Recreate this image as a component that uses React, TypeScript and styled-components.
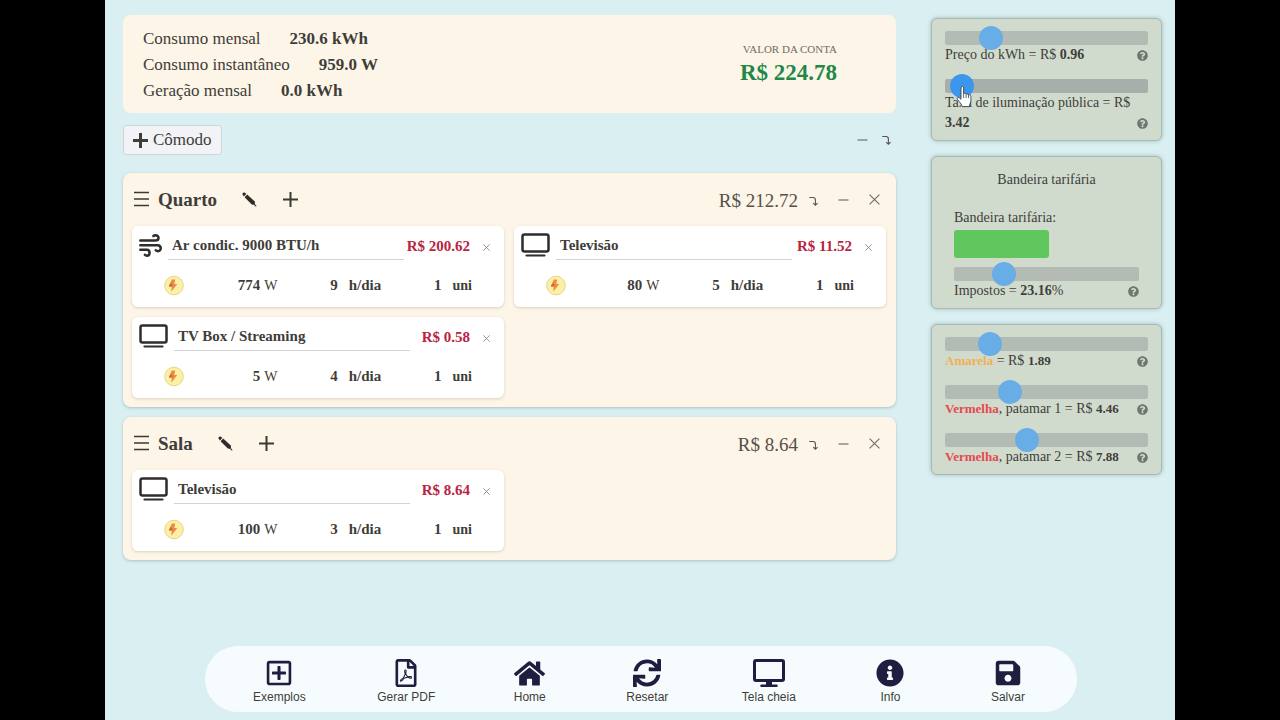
import React, { useState } from 'react';
import styled, { createGlobalStyle } from 'styled-components';
import {
  FaHome,
  FaInfoCircle,
  FaQuestionCircle,
  FaRegFilePdf,
  FaRegPlusSquare,
  FaSave,
  FaSync,
} from 'react-icons/fa';

const GlobalStyle = createGlobalStyle`
  * { box-sizing: border-box; }
  body {
    margin: 0;
    background: #000;
    color: #3f3d3a;
    font-family: "Liberation Serif", "Times New Roman", serif;
  }
  button, input, select { font: inherit; color: inherit; }
`;

const Page = styled.div`
  display: flex;
  flex-direction: column;
  min-height: 100vh;
  margin: 0 105px;
  background: #daeff1;
`;

const Columns = styled.div`
  display: flex;
  align-items: flex-start;
  gap: 35px;
  padding: 15px 13px 15px 18px;
`;

const Main = styled.main`
  flex: 1;
  min-width: 0;
`;

const Summary = styled.section`
  display: flex;
  align-items: center;
  justify-content: space-between;
  padding: 11px 59px 9px 20px;
  border-radius: 8px;
  background: #fdf5e7;
`;

const Stats = styled.dl`
  margin: 0;
  font-size: 17px;
  line-height: 26px;
`;

const Stat = styled.div`
  display: flex;
  gap: 29px;
  dd {
    margin: 0;
    font-weight: bold;
  }
`;

const Bill = styled.div`
  text-align: right;
`;

const BillLabel = styled.div`
  font-size: 11px;
  line-height: 16px;
  color: #716b63;
`;

const BillValue = styled.div`
  font-size: 23px;
  line-height: 32px;
  font-weight: bold;
  color: #228848;
`;

const Toolbar = styled.div`
  display: flex;
  align-items: center;
  justify-content: space-between;
  margin: 12px 0 18px;
  padding-right: 5px;
`;

const AddRoom = styled.button`
  display: flex;
  align-items: center;
  gap: 5px;
  height: 30px;
  padding: 0 9px;
  border: 1px solid #cfd5d8;
  border-radius: 3px;
  background: #f1f3f6;
  font-size: 17px;
`;

const Actions = styled.div<{ $gap: number }>`
  display: flex;
  align-items: center;
  gap: ${(p) => p.$gap}px;
`;

const IconButton = styled.button`
  display: flex;
  flex: none;
  align-items: center;
  justify-content: center;
  padding: 0;
  border: 0;
  background: none;
  color: #3a3936;
`;

const RoomList = styled.div`
  display: flex;
  flex-direction: column;
  gap: 10px;
`;

const RoomCard = styled.section`
  padding: 0 10px 9px 9px;
  border-radius: 8px;
  background: #fdf5e7;
  box-shadow: 0 1px 3px rgba(60, 90, 90, 0.3);
`;

const RoomHeader = styled.header`
  display: flex;
  align-items: center;
  height: 53px;
  padding: 0 6px 0 2px;
`;

const RoomTitle = styled.h2`
  margin: 0 25px 0 9px;
  font-size: 19px;
  line-height: 24px;
`;

const RoomTotal = styled.span`
  margin: 2px 11px 0 auto;
  font-size: 19px;
  line-height: 24px;
  color: #55504a;
`;

const Devices = styled.div`
  display: grid;
  grid-template-columns: 1fr 1fr;
  gap: 10px;
`;

const DeviceCard = styled.article`
  height: 81px;
  border-radius: 6px;
  background: #fff;
  box-shadow: 0 1px 3px rgba(90, 80, 60, 0.22);
`;

const DeviceTop = styled.div`
  display: flex;
  align-items: center;
  height: 38px;
  padding: 0 14px 0 7px;
`;

const DeviceName = styled.input`
  flex: 0 1 236px;
  min-width: 0;
  height: 28px;
  margin: 2px 0 0 6px;
  padding: 0 4px;
  border: 0;
  border-bottom: 1px solid #d4d4d6;
  background: none;
  font-size: 15px;
  font-weight: bold;
`;

const DeviceCost = styled.span`
  margin: 2px 13px 0 auto;
  font-size: 15px;
  font-weight: bold;
  color: #b92441;
  white-space: nowrap;
`;

const RemoveDevice = styled(IconButton)`
  margin-top: 4px;
`;

const DeviceFields = styled.div`
  display: flex;
  align-items: center;
  justify-content: space-between;
  height: 43px;
  padding: 0 32px;
`;

const Field = styled.label<{ $gap: number; $unit: number }>`
  display: flex;
  align-items: baseline;
  gap: ${(p) => p.$gap}px;
  font-size: ${(p) => p.$unit}px;
  font-weight: bold;
`;

const NumberInput = styled.input<{ $width: number }>`
  width: ${(p) => p.$width}px;
  padding: 0;
  border: 0;
  background: none;
  font-size: 15px;
  font-weight: bold;
  text-align: right;
`;

const Watt = styled.span`
  font-weight: normal;
`;

const Sidebar = styled.aside`
  display: flex;
  flex: 0 0 231px;
  flex-direction: column;
  gap: 15px;
  padding-top: 3px;
`;

const Panel = styled.section<{ $inset: number }>`
  padding: 12px ${(p) => p.$inset}px 7px;
  border: 1px solid #a8bab2;
  border-radius: 6px;
  background: #d0dbce;
  box-shadow: 0 0 4px rgba(70, 110, 110, 0.4);
  font-size: 14px;
  line-height: 20px;
`;

const PanelTitle = styled.h3`
  margin: 1px 0 18px;
  font-size: 14px;
  font-weight: normal;
  text-align: center;
`;

const FlagLabel = styled.label`
  display: block;
`;

const FlagSelect = styled.select`
  display: block;
  width: 95px;
  height: 28px;
  margin: 2px 0 9px;
  border: 0;
  border-radius: 3px;
  background: #60c75e;
  appearance: none;
`;

const SliderBlock = styled.div`
  position: relative;
  & + & {
    margin-top: 14px;
  }
`;

const Range = styled.input<{ $active?: boolean }>`
  position: relative;
  z-index: 1;
  display: block;
  width: 100%;
  height: 14px;
  margin: 0;
  border-radius: 2px;
  background: ${(p) => (p.$active ? '#a8afaa' : '#b3bbb4')};
  appearance: none;
  outline: none;

  &::-webkit-slider-thumb {
    width: 24px;
    height: 24px;
    border-radius: 50%;
    background: ${(p) => (p.$active ? '#3c97ec' : '#68ade5')};
    appearance: none;
  }
`;

const Caption = styled.div`
  display: flex;
  align-items: flex-end;
  justify-content: space-between;
`;

const FlagName = styled.b<{ $color: string }>`
  font-size: 13px;
  color: ${(p) => p.$color};
`;

const FlagPrice = styled.b`
  font-size: 13px;
`;

const HelpButton = styled(IconButton)`
  height: 20px;
  color: #6f7670;
`;

const HandCursor = styled.svg`
  position: absolute;
  z-index: 2;
  top: 7px;
  left: 11px;
  pointer-events: none;
`;

const BottomBar = styled.nav`
  display: flex;
  justify-content: space-between;
  height: 66px;
  margin: auto 98px 8px 100px;
  padding: 13px 46px 0 48px;
  border-radius: 33px;
  background: #f6fcfd;
`;

const BarButton = styled.button`
  display: flex;
  flex-direction: column;
  align-items: center;
  gap: 2px;
  min-width: 46px;
  padding: 0;
  border: 0;
  background: none;
  font-family: "Liberation Sans", Arial, sans-serif;
  font-size: 12px;
  line-height: 16px;
`;

const BarIcon = styled.span`
  display: flex;
  align-items: center;
  height: 28px;
  color: #1f1d40;
`;

const Plus = ({ weight = 2 }: { weight?: number }) => (
  <svg width="15" height="15" viewBox="0 0 15 15" stroke="currentColor" strokeWidth={weight}>
    <path d="M7.5 0v15M0 7.5h15" />
  </svg>
);

const Menu = () => (
  <svg width="15" height="17" viewBox="0 0 15 17" stroke="currentColor" strokeWidth="1.4">
    <path d="M0 1.500h15M0 8h15M0 14.500h15" />
  </svg>
);

const Dash = () => (
  <svg width="11" height="12" viewBox="0 0 11 12" stroke="#66645f" strokeWidth="1.1">
    <path d="M.5 6h10" />
  </svg>
);

// The glyph hangs below the centre line when it follows a total.
const TurnDown = ({ low }: { low?: boolean }) => (
  <svg width="9" height="15" viewBox={low ? '0 0 9 15' : '0 2 9 15'} fill="none" stroke="#55544f" strokeWidth="1.1">
    <path d="M.3 5.500H4q2.400 0 2.400 2.400v4.800M4.200 11.200l2.200 2 2.200-2" />
  </svg>
);

const Cross = ({ size }: { size: number }) => (
  <svg width={size} height={size} viewBox="0 0 10 10" stroke="#6d6b68" strokeWidth="1">
    <path d="M.5.5l9 9M9.5.5l-9 9" />
  </svg>
);

const Pencil = () => (
  <svg width="15" height="15" viewBox="0 0 15 15" fill="#2f2d2b">
    <path d="M.5 2.600C0 1.200 1.600-.1 3 .7l1.300 1.200-2.400 2.500z" />
    <path d="M2.600 5.200L5.200 2.500l7.600 7 .3 3.500-3.300-.4z" />
    <path d="M12.200 14l1.500-1.500.8 2.100z" />
  </svg>
);

const Wind = () => (
  <svg width="23" height="23" viewBox="0 0 23 23" fill="none" stroke="#2f2d2b" strokeWidth="2.5" strokeLinecap="round">
    <path d="M1.300 6.600h15c4.200 0 4.300-5.300.2-5.300-1 0-1.600.2-2.100.7" />
    <path d="M1.300 11.200h17.300c4.200.2 4 6 .4 6-1 0-1.700-.3-2.200-.9" />
    <path d="M1.300 15.700h6.600c3.700.2 3.400 5.900.1 6-1 0-1.700-.3-2.100-.9" />
  </svg>
);

const Television = () => (
  <svg width="29" height="24" viewBox="0 0 29 24" fill="none" stroke="#2f2d2b">
    <rect x="1.500" y="1.500" width="26" height="17" rx="2" strokeWidth="2.500" />
    <path d="M5.500 22.500h18" strokeWidth="2.200" strokeLinecap="round" />
  </svg>
);

const Bolt = () => (
  <svg width="20" height="21" viewBox="0 0 20 21">
    <circle cx="10" cy="10.500" r="9.300" fill="#fbf1a6" stroke="#ecd385" strokeWidth="1" />
    <path d="M7.800 4.500h3.400L10.300 8.900h3L7.200 16.700l1-5.200H4.800z" fill="#ef8a46" />
    <path d="M4.800 11.500l1.500-3.300 2.300 1.200-.4 2.100-1 5.200.7-5.200z" fill="#d3673c" />
  </svg>
);

const Monitor = () => (
  <svg width="32" height="28" viewBox="0 0 32 28" fill="#1f1d40">
    <path
      fillRule="evenodd"
      d="M3 0h26a3 3 0 013 3v17a3 3 0 01-3 3H19v2.500h4.500a1.200 1.200 0 010 2.500h-15a1.200 1.200 0 010-2.500H13V23H3a3 3 0 01-3-3V3a3 3 0 013-3zm0 3v17h26V3z"
    />
  </svg>
);

type Device = { icon: 'wind' | 'tv'; name: string; cost: string; watts: number; hours: number; units: number };
type Room = { name: string; total: string; devices: Device[] };

const rooms: Room[] = [
  {
    name: 'Quarto',
    total: 'R$ 212.72',
    devices: [
      { icon: 'wind', name: 'Ar condic. 9000 BTU/h', cost: 'R$ 200.62', watts: 774, hours: 9, units: 1 },
      { icon: 'tv', name: 'Televisão', cost: 'R$ 11.52', watts: 80, hours: 5, units: 1 },
      { icon: 'tv', name: 'TV Box / Streaming', cost: 'R$ 0.58', watts: 5, hours: 4, units: 1 },
    ],
  },
  {
    name: 'Sala',
    total: 'R$ 8.64',
    devices: [{ icon: 'tv', name: 'Televisão', cost: 'R$ 8.64', watts: 100, hours: 3, units: 1 }],
  },
];

const stats = [
  ['Consumo mensal', '230.6 kWh'],
  ['Consumo instantâneo', '959.0 W'],
  ['Geração mensal', '0.0 kWh'],
];

const barItems = [
  { label: 'Exemplos', icon: <FaRegPlusSquare size={28} /> },
  { label: 'Gerar PDF', icon: <FaRegFilePdf size={28} /> },
  { label: 'Home', icon: <FaHome size={31} /> },
  { label: 'Resetar', icon: <FaSync size={28} /> },
  { label: 'Tela cheia', icon: <Monitor /> },
  { label: 'Info', icon: <FaInfoCircle size={28} /> },
  { label: 'Salvar', icon: <FaSave size={28} /> },
];

function DeviceItem({ device }: { device: Device }) {
  return (
    <DeviceCard>
      <DeviceTop>
        {device.icon === 'wind' ? <Wind /> : <Television />}
        <DeviceName aria-label="Nome do aparelho" defaultValue={device.name} />
        <DeviceCost>{device.cost}</DeviceCost>
        <RemoveDevice aria-label="Remover aparelho">
          <Cross size={7} />
        </RemoveDevice>
      </DeviceTop>
      <DeviceFields>
        <Bolt />
        <Field $gap={4} $unit={14}>
          <NumberInput $width={52} defaultValue={device.watts} />
          <Watt>W</Watt>
        </Field>
        <Field $gap={11} $unit={15}>
          <NumberInput $width={36} defaultValue={device.hours} />
          h/dia
        </Field>
        <Field $gap={11} $unit={14}>
          <NumberInput $width={36} defaultValue={device.units} />
          uni
        </Field>
      </DeviceFields>
    </DeviceCard>
  );
}

type SliderProps = { id: string; position: number; active?: boolean; children: React.ReactNode };

function Slider({ id, position, active, children }: SliderProps) {
  const [value, setValue] = useState(position);
  return (
    <SliderBlock>
      <Range
        id={id}
        type="range"
        min={0}
        max={1000}
        value={value}
        $active={active}
        onChange={(e) => setValue(Number(e.target.value))}
      />
      <Caption>
        <label htmlFor={id}>{children}</label>
        <HelpButton aria-label="Ajuda">
          <FaQuestionCircle size={11} />
        </HelpButton>
      </Caption>
      {active && (
        <HandCursor width="17" height="22" viewBox="0 0 17 22">
          <path
            d="M5 1.8c0-1.7 2.6-1.7 2.6 0v6c.6-.8 2.3-.6 2.5.5.8-.7 2.2-.4 2.4.7 1-.6 2.4 0 2.4 1.4v4.2c0 2-1.3 3.2-1.5 6H6.2c-.3-2.4-3-4.7-4.800-7.300-.8-1.400.8-2.500 2-1.500L5 13.300z"
            fill="#fff"
            stroke="#39424c"
            strokeWidth=".9"
          />
          <path d="M7.600 8v4M10.100 8.500v3.500M12.500 9v3" stroke="#39424c" strokeWidth=".8" />
        </HandCursor>
      )}
    </SliderBlock>
  );
}

export default function App() {
  return (
    <Page>
      <GlobalStyle />
      <Columns>
        <Main>
          <Summary>
            <Stats>
              {stats.map(([label, value]) => (
                <Stat key={label}>
                  <dt>{label}</dt>
                  <dd>{value}</dd>
                </Stat>
              ))}
            </Stats>
            <Bill>
              <BillLabel>VALOR DA CONTA</BillLabel>
              <BillValue>R$ 224.78</BillValue>
            </Bill>
          </Summary>

          <Toolbar>
            <AddRoom>
              <Plus weight={3} /> Cômodo
            </AddRoom>
            <Actions $gap={14}>
              <IconButton aria-label="Recolher todos">
                <Dash />
              </IconButton>
              <IconButton aria-label="Ordenar cômodos">
                <TurnDown />
              </IconButton>
            </Actions>
          </Toolbar>

          <RoomList>
            {rooms.map((room) => (
              <RoomCard key={room.name}>
                <RoomHeader>
                  <IconButton aria-label="Mover cômodo">
                    <Menu />
                  </IconButton>
                  <RoomTitle>{room.name}</RoomTitle>
                  <Actions $gap={26}>
                    <IconButton aria-label="Renomear cômodo">
                      <Pencil />
                    </IconButton>
                    <IconButton aria-label="Adicionar aparelho">
                      <Plus />
                    </IconButton>
                  </Actions>
                  <RoomTotal>{room.total}</RoomTotal>
                  <Actions $gap={20}>
                    <IconButton aria-label="Ordenar aparelhos">
                      <TurnDown low />
                    </IconButton>
                    <IconButton aria-label="Recolher cômodo">
                      <Dash />
                    </IconButton>
                    <IconButton aria-label="Remover cômodo">
                      <Cross size={11} />
                    </IconButton>
                  </Actions>
                </RoomHeader>
                <Devices>
                  {room.devices.map((device) => (
                    <DeviceItem key={device.name} device={device} />
                  ))}
                </Devices>
              </RoomCard>
            ))}
          </RoomList>
        </Main>

        <Sidebar>
          <Panel $inset={13}>
            <Slider id="preco" position={189}>
              Preço do kWh = R$ <b>0.96</b>
            </Slider>
            <Slider id="taxa" position={28} active>
              Taxa de iluminação pública = R$ <b>3.42</b>
            </Slider>
          </Panel>

          <Panel $inset={22}>
            <PanelTitle>Bandeira tarifária</PanelTitle>
            <FlagLabel htmlFor="bandeira">Bandeira tarifária:</FlagLabel>
            <FlagSelect id="bandeira">
              <option value="verde" aria-label="Verde" />
            </FlagSelect>
            <Slider id="impostos" position={236}>
              Impostos = <b>23.16</b>%
            </Slider>
          </Panel>

          <Panel $inset={13}>
            <Slider id="amarela" position={186}>
              <FlagName $color="#f3b04e">Amarela</FlagName> = R$ <FlagPrice>1.89</FlagPrice>
            </Slider>
            <Slider id="vermelha1" position={294}>
              <FlagName $color="#e9474f">Vermelha</FlagName>, patamar 1 = R$ <FlagPrice>4.46</FlagPrice>
            </Slider>
            <Slider id="vermelha2" position={389}>
              <FlagName $color="#e9474f">Vermelha</FlagName>, patamar 2 = R$ <FlagPrice>7.88</FlagPrice>
            </Slider>
          </Panel>
        </Sidebar>
      </Columns>

      <BottomBar>
        {barItems.map((item) => (
          <BarButton key={item.label}>
            <BarIcon>{item.icon}</BarIcon>
            {item.label}
          </BarButton>
        ))}
      </BottomBar>
    </Page>
  );
}
